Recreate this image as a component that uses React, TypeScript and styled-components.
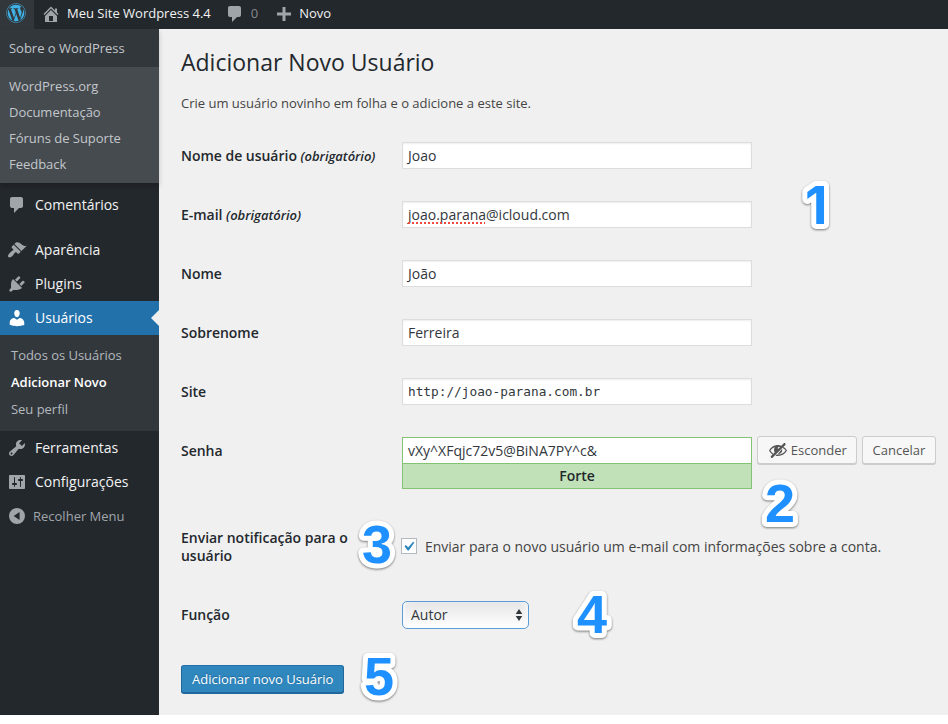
import React from "react";
import styled, { createGlobalStyle, css } from "styled-components";
import { FaWordpress } from "react-icons/fa";

const GlobalStyle = createGlobalStyle`
  *, *::before, *::after { box-sizing: border-box; }
  html, body { margin: 0; padding: 0; background: #fff; }
  body {
    width: 948px;
    height: 724px;
    overflow: hidden;
    font-family: "Open Sans", sans-serif;
    font-size: 13px;
    color: #444;
  }
`;

const paths = {
  home: "M16 8.5l1.53 1.53-1.06 1.06L10 4.6l-6.47 6.49-1.06-1.06L10 2.5l4 4v-2h2v4zm-6-2.46l6 5.99V18H4v-5.97zM12 17v-5H8v5h4z",
  comment: "M5 2h9c1.1 0 2 .9 2 2v7c0 1.1-.9 2-2 2h-2l-5 5v-5H5c-1.1 0-2-.9-2-2V4c0-1.1.9-2 2-2z",
  plus: "M17 8.5v3h-5.500V17h-3v-5.500H3v-3h5.500V3h3v5.500z",
  appearance: "M14.48 11.06L7.41 3.99l1.5-1.5c.5-.56 2.3-.47 3.51.32 1.21.8 1.43 1.28 2.91 2.1 1.18.64 2.45 1.26 4.45.85zm-.71.71L6.7 4.7 4.93 6.47c-.39.39-.39 1.02 0 1.41l1.06 1.06c.39.39.39 1.03 0 1.42-.6.6-1.43 1.11-2.21 1.69-.35.26-.7.53-1.01.84C1.43 14.23.4 16.08 1.4 17.07c.99 1 2.84-.03 4.18-1.36.31-.31.58-.66.85-1.02.57-.78 1.08-1.61 1.69-2.21.39-.39 1.02-.39 1.41 0l1.06 1.06c.39.39 1.02.39 1.41 0z",
  plugins: "M13.11 4.36L9.87 7.6 8 5.73l3.24-3.24c.35-.34 1.05-.2 1.56.32.52.51.66 1.21.31 1.55zm-8 1.77l.91-1.12 9.01 9.01-1.19.84c-.71.71-2.63 1.16-3.82 1.16H6.14L4.9 17.26c-.59.59-1.54.59-2.12 0-.59-.58-.59-1.53 0-2.12l1.24-1.24v-3.88c0-1.13.4-3.19 1.09-3.89zm7.26 3.97l3.24-3.24c.34-.35 1.04-.21 1.55.31.52.51.66 1.21.31 1.55l-3.24 3.25z",
  users: "M10 9.25c-2.27 0-2.73-3.44-2.73-3.44C7 4.02 7.82 2 9.97 2c2.16 0 2.98 2.02 2.71 3.81 0 0-.41 3.44-2.68 3.44zm0 2.57L12.72 10c2.39 0 4.52 2.33 4.52 4.53v2.49s-3.65 1.13-7.24 1.13c-3.65 0-7.24-1.13-7.24-1.13v-2.49c0-2.25 1.94-4.48 4.47-4.48z",
  tools: "M16.68 9.77c-1.34 1.34-3.3 1.67-4.95.99l-5.41 6.52c-.99.99-2.59.99-3.58 0s-.99-2.59 0-3.57l6.52-5.42c-.68-1.65-.35-3.61.99-4.95 1.28-1.28 3.12-1.62 4.72-1.06l-2.89 2.89 2.82 2.82 2.86-2.87c.53 1.58.18 3.39-1.08 4.65zM3.81 16.21c.4.39 1.04.39 1.43 0 .4-.4.4-1.04 0-1.43-.39-.4-1.03-.4-1.43 0-.39.39-.39 1.03 0 1.43z",
  settings: "M18 16V4c0-.55-.45-1-1-1H3c-.55 0-1 .45-1 1v12c0 .55.45 1 1 1h14c.55 0 1-.45 1-1zM8 11h1c.55 0 1 .45 1 1s-.45 1-1 1H8v1.500c0 .28-.22.5-.5.5s-.5-.22-.5-.5V13H6c-.55 0-1-.45-1-1s.45-1 1-1h1V5.500c0-.28.22-.5.5-.5s.5.22.5.5V11zm5-2h-1c-.55 0-1-.45-1-1s.45-1 1-1h1V5.500c0-.28.22-.5.5-.5s.5.22.5.5V7h1c.55 0 1 .45 1 1s-.45 1-1 1h-1v5.500c0 .28-.22.5-.5.5s-.5-.22-.5-.5V9z",
  collapse: "M10 2a8 8 0 1 0 0 16a8 8 0 0 0 0-16zM12.600 6v8L6.700 10z",
  hidden: "M17.2 3.3l.16.17c.39.39.39 1.02 0 1.41L4.55 17.7c-.39.39-1.03.39-1.41 0l-.17-.17c-.39-.39-.39-1.02 0-1.41l1.59-1.6c-1.57-1-2.76-2.3-3.56-3.93.81-1.65 2.03-2.98 3.64-3.99S8.04 5.09 10 5.09c1.2 0 2.33.21 3.4.6l2.38-2.39c.39-.39 1.03-.39 1.42 0zm-7.09 4.01c-.23.25-.34.54-.34.88 0 .31.12.58.31.81l1.8-1.79c-.13-.12-.28-.21-.45-.26-.11-.01-.28-.03-.49-.04-.33.03-.6.16-.83.4zM2.4 10.59c.69 1.23 1.71 2.25 3.05 3.05l1.28-1.28c-.51-.69-.77-1.47-.77-2.36 0-1.06.36-1.98 1.09-2.76-1.04.27-1.96.7-2.76 1.26-.8.58-1.43 1.27-1.89 2.09zM15.700 7c1.400.9 2.500 2.100 3.300 3.590c-1.700 3.400-5 5.410-9 5.410c-.9 0-1.700-.1-2.500-.3l1.200-1.200c.4.1.9.1 1.300.1c3.200 0 5.900-1.500 7.600-4.010c-.7-1.090-1.700-1.990-3-2.600zM14 8.900c.9 2.900-1.300 5.200-4.100 5z",
  check: "M14.830 4.890l1.340.94-5.810 8.380H9.020L5.780 9.670l1.340-1.250 2.570 2.400z",
};

const Svg = styled.svg<{ $size: number }>`
  display: block;
  flex: none;
  width: ${(p) => p.$size}px;
  height: ${(p) => p.$size}px;
  fill: currentColor;
`;

function Icon({ name, size = 20 }: { name: keyof typeof paths; size?: number }) {
  return (
    <Svg $size={size} viewBox="0 0 20 20" aria-hidden="true">
      <path d={paths[name]} fillRule="evenodd" />
    </Svg>
  );
}

const Screen = styled.div`
  position: relative;
  width: 948px;
  height: 715px;
  display: flex;
  flex-direction: column;
  background: #f0f0f0;
`;

const AdminBar = styled.header`
  height: 29px;
  flex: none;
  display: flex;
  align-items: stretch;
  background: #23282d;
  color: #eee;
`;

const Logo = styled.div`
  width: 34px;
  padding: 3px 0 0 6px;
  background: #32373c;
  color: #3fb1e5;
  svg { display: block; width: 20px; height: 20px; }
`;

const BarItem = styled.div<{ $left: number; $gap: number; $dim?: boolean }>`
  display: flex;
  align-items: center;
  gap: ${(p) => p.$gap}px;
  padding: 0 0 3px;
  margin-left: ${(p) => p.$left}px;
  font-size: 13px;
  color: ${(p) => (p.$dim ? "#85898c" : "#f2f2f2")};
  svg { color: #a0a5aa; margin-top: 1px; }
`;

const Body = styled.div`
  flex: 1;
  display: flex;
  min-height: 0;
`;

const Sidebar = styled.nav`
  width: 159px;
  flex: none;
  background: #23282d;
`;

const Dropdown = styled.div`
  position: relative;
  height: 154px;
  background: #464b50;
  box-shadow: 0 3px 5px rgba(0, 0, 0, 0.2);
  color: #c3c7cb;
  letter-spacing: -0.02px;
`;

const DropdownHead = styled.div`
  height: 38px;
  line-height: 38px;
  padding-left: 9px;
  background: #32373c;
`;

const DropdownList = styled.div`
  padding-top: 6px;
`;

const DropdownItem = styled.div`
  height: 26px;
  line-height: 26px;
  padding-left: 9px;
`;

const MenuItem = styled.div<{ $active?: boolean; $muted?: boolean; $top?: number }>`
  position: relative;
  height: 34px;
  margin-top: ${(p) => p.$top ?? 0}px;
  padding: 0 0 ${(p) => (p.$muted ? 0 : 2)}px 7px;
  display: flex;
  align-items: center;
  gap: ${(p) => (p.$muted ? 6 : 8)}px;
  font-size: ${(p) => (p.$muted ? 13 : 14)}px;
  color: ${(p) => (p.$muted ? "#a0a5aa" : "#f2f2f2")};
  svg { color: #a0a5aa; margin-top: ${(p) => (p.$muted ? 0 : 2)}px; }
  ${(p) =>
    p.$active &&
    css`
      background: #2371ab;
      color: #fff;
      svg { color: #fff; }
      &::after {
        content: "";
        position: absolute;
        right: 0;
        top: 9px;
        border: 8px solid transparent;
        border-left-width: 0;
        border-right-color: #f0f0f0;
      }
    `}
`;

const SubMenu = styled.div`
  height: 96px;
  padding-top: 7px;
  background: #32373c;
`;

const SubItem = styled.div<{ $current?: boolean }>`
  height: 27px;
  line-height: 27px;
  padding-left: 11px;
  letter-spacing: -0.03px;
  color: ${(p) => (p.$current ? "#fff" : "#b4b9be")};
  font-weight: ${(p) => (p.$current ? 600 : 400)};
`;

const Content = styled.main`
  flex: 1;
  padding: 19px 0 0 22px;
`;

const Title = styled.h1`
  margin: 0;
  height: 29px;
  line-height: 29px;
  font-size: 23px;
  font-weight: 400;
  color: #23282d;
`;

const Intro = styled.p`
  margin: 16px 0 0;
  height: 20px;
  line-height: 20px;
`;

const Form = styled.form`
  margin-top: 13px;
`;

const Row = styled.div<{ $height?: number }>`
  height: ${(p) => p.$height ?? 59}px;
  padding-top: 16px;
  display: grid;
  grid-template-columns: 221px 1fr;
  align-items: start;
`;

const Label = styled.label<{ $top?: number }>`
  margin-top: ${(p) => p.$top ?? 5}px;
  width: 200px;
  line-height: 18px;
  font-size: 14px;
  font-weight: 600;
  letter-spacing: -0.02px;
  color: #23282d;
  white-space: nowrap;
  em { font-size: 13px; }
`;

const Field = styled.div<{ $mono?: boolean; $strong?: boolean }>`
  width: 350px;
  height: 27px;
  line-height: 26px;
  padding-left: 5px;
  border: 1px solid ${(p) => (p.$strong ? "#83c373" : "#ddd")};
  background: #fff;
  box-shadow: ${(p) => (p.$strong ? "none" : "inset 0 1px 2px rgba(0, 0, 0, 0.07)")};
  color: #32373c;
  font-size: 14px;
  ${(p) => p.$mono && css`font-family: "DejaVu Sans Mono", monospace; font-size: 12.780px;`}
`;

const Misspelled = styled.span`
  position: relative;
  &::after {
    content: "";
    position: absolute;
    left: 0;
    right: 1px;
    bottom: 0;
    height: 2px;
    background: radial-gradient(circle at 1px 1px, #f0493e 0.900px, transparent 1.400px) 0 0 / 4px 2px repeat-x;
  }
`;

const PasswordLine = styled.div`
  display: flex;
  align-items: flex-start;
`;

const Strength = styled.div`
  height: 26px;
  margin-top: -1px;
  line-height: 24px;
  text-align: center;
  border: 1px solid #83c373;
  background: #c1e1b9;
  color: #23282d;
  font-size: 14px;
  font-weight: 600;
`;

const Button = styled.button<{ $primary?: boolean; $left?: number }>`
  height: 28px;
  margin: ${(p) => (p.$primary ? "0" : "-1px 0 0")};
  margin-left: ${(p) => p.$left ?? 0}px;
  padding: 0 ${(p) => (p.$primary ? 10 : 9.5)}px 0 ${(p) => (p.$primary ? 10 : 9.75)}px;
  display: inline-flex;
  align-items: center;
  gap: 3px;
  border: 1px solid #ccc;
  border-radius: 3px;
  background: #f7f7f7;
  box-shadow: 0 1px 0 #ccc;
  color: #555;
  font: 400 13px "Open Sans", sans-serif;
  white-space: nowrap;
  ${(p) =>
    p.$primary &&
    css`
      border-color: #2371ab #20689b #20689b;
      background: #2f87be;
      box-shadow: 0 1px 0 #20689b;
      color: #fff;
      text-shadow: 0 -1px 1px #20689b;
    `}
`;

const CheckLine = styled.div`
  display: flex;
  align-items: center;
  margin-top: 13px;
  font-size: 14px;
  line-height: 20px;
  gap: 8px;
  letter-spacing: -0.01px;
`;

const CheckBox = styled.span`
  width: 16px;
  height: 16px;
  margin: -2px 0 0 -1px;
  display: flex;
  align-items: center;
  justify-content: center;
  border: 1px solid #b4b9be;
  background: #fff;
  color: #2f87be;
  svg { margin-left: -1px; }
`;

const Select = styled.div`
  width: 127px;
  height: 28px;
  margin-top: -1px;
  padding: 0 5px 0 8px;
  display: flex;
  align-items: center;
  justify-content: space-between;
  border: 1px solid #5b9dd9;
  border-radius: 5px;
  background: linear-gradient(#e6e6e6, #fff);
  box-shadow: inset 4px 0 4px -2px #f8f8f8, inset -4px 0 4px -2px #f8f8f8;
  color: #32373c;
  font-size: 14px;
  line-height: 26px;
`;

const Marker = styled.svg<{ $x: number; $y: number; $plain?: boolean }>`
  position: absolute;
  left: ${(p) => p.$x}px;
  top: ${(p) => p.$y}px;
  width: 30px;
  height: 40px;
  overflow: visible;
  font: ${(p) => (p.$plain ? '700 52px "Inter"' : '700 54px "Liberation Sans"')}, sans-serif;
  fill: #1e90ff;
  stroke: #fff;
  stroke-width: 10px;
  stroke-linejoin: round;
  paint-order: stroke fill;
  filter: drop-shadow(0 1px 1.200px rgba(0, 0, 0, 0.5));
`;

const markers = [
  { n: 1, x: 804.5, y: 184, plain: true },
  { n: 2, x: 765, y: 482 },
  { n: 3, x: 361.5, y: 523 },
  { n: 4, x: 577, y: 593 },
  { n: 5, x: 363.5, y: 655 },
];

export default function App() {
  return (
    <>
      <GlobalStyle />
      <Screen>
        <AdminBar>
          <Logo><FaWordpress /></Logo>
          <BarItem $left={7} $gap={6}><Icon name="home" />Meu Site Wordpress 4.4</BarItem>
          <BarItem $left={14} $gap={6} $dim><Icon name="comment" />0</BarItem>
          <BarItem $left={16} $gap={5}><Icon name="plus" />Novo</BarItem>
        </AdminBar>
        <Body>
          <Sidebar>
            <Dropdown>
              <DropdownHead>Sobre o WordPress</DropdownHead>
              <DropdownList>
                <DropdownItem>WordPress.org</DropdownItem>
                <DropdownItem>Documentação</DropdownItem>
                <DropdownItem>Fóruns de Suporte</DropdownItem>
                <DropdownItem>Feedback</DropdownItem>
              </DropdownList>
            </Dropdown>
            <MenuItem $top={5}><Icon name="comment" />Comentários</MenuItem>
            <MenuItem $top={11}><Icon name="appearance" />Aparência</MenuItem>
            <MenuItem><Icon name="plugins" />Plugins</MenuItem>
            <MenuItem $active><Icon name="users" />Usuários</MenuItem>
            <SubMenu>
              <SubItem>Todos os Usuários</SubItem>
              <SubItem $current>Adicionar Novo</SubItem>
              <SubItem>Seu perfil</SubItem>
            </SubMenu>
            <MenuItem><Icon name="tools" />Ferramentas</MenuItem>
            <MenuItem><Icon name="settings" />Configurações</MenuItem>
            <MenuItem $muted><Icon name="collapse" />Recolher Menu</MenuItem>
          </Sidebar>
          <Content>
            <Title>Adicionar Novo Usuário</Title>
            <Intro>Crie um usuário novinho em folha e o adicione a este site.</Intro>
            <Form>
              <Row>
                <Label>Nome de usuário <em>(obrigatório)</em></Label>
                <Field>Joao</Field>
              </Row>
              <Row>
                <Label>E-mail <em>(obrigatório)</em></Label>
                <Field><Misspelled>joao.parana</Misspelled>@icloud.com</Field>
              </Row>
              <Row><Label>Nome</Label><Field>João</Field></Row>
              <Row><Label>Sobrenome</Label><Field>Ferreira</Field></Row>
              <Row><Label>Site</Label><Field $mono>http://joao-parana.com.br</Field></Row>
              <Row $height={87}>
                <Label>Senha</Label>
                <PasswordLine>
                  <div>
                    <Field $strong>vXy^XFqjc72v5@BiNA7PY^c&amp;</Field>
                    <Strength>Forte</Strength>
                  </div>
                  <Button type="button" $left={5}><Icon name="hidden" />Esconder</Button>
                  <Button type="button" $left={4.5}>Cancelar</Button>
                </PasswordLine>
              </Row>
              <Row $height={78}>
                <Label>Enviar notificação para o<br />usuário</Label>
                <CheckLine>
                  <CheckBox><Icon name="check" size={19} /></CheckBox>
                  Enviar para o novo usuário um e-mail com informações sobre a conta.
                </CheckLine>
              </Row>
              <Row $height={79}>
                <Label $top={4}>Função</Label>
                <Select>
                  <span>Autor</span>
                  <svg width="8" height="14" viewBox="0 0 8 14" fill="#32373c" aria-hidden="true">
                    <path d="M4 1l3.300 5H.7zM4 13l3.300-5H.7z" />
                  </svg>
                </Select>
              </Row>
              <Button type="button" $primary>Adicionar novo Usuário</Button>
            </Form>
          </Content>
        </Body>
        {markers.map((m) => (
          <Marker key={m.n} $x={m.x} $y={m.y} $plain={m.plain}>
            <text x="0" y="40">{m.n}</text>
          </Marker>
        ))}
      </Screen>
    </>
  );
}
